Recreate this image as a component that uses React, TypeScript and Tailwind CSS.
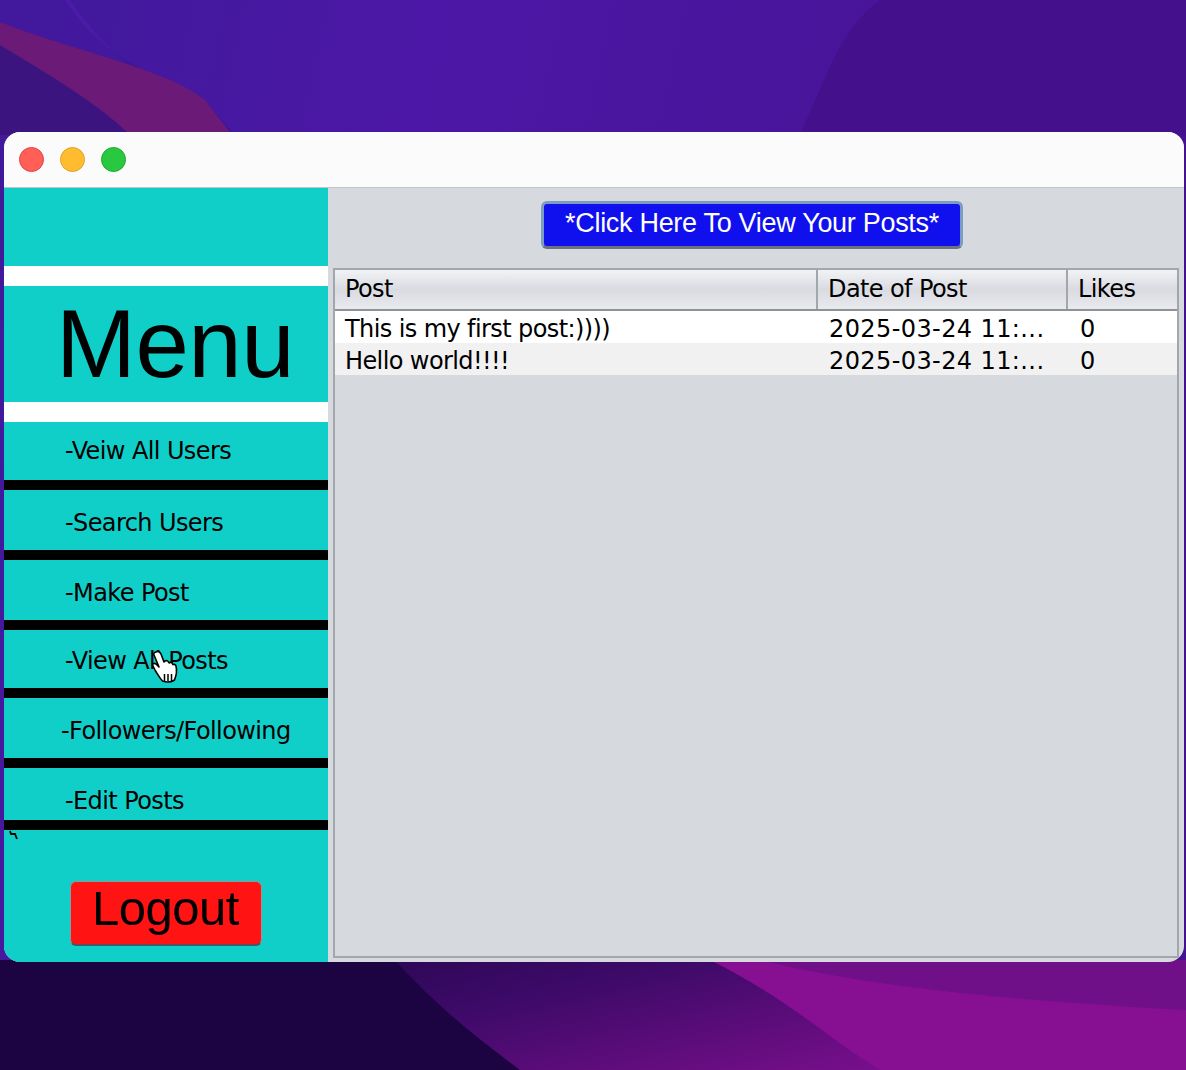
import React from "react";

const menuItems = [
  { label: "-Veiw All Users", height: "h-[58px]", pad: "pl-[61px]", offset: "pt-[15px]" },
  { label: "-Search Users", height: "h-[60px]", pad: "pl-[61px]", offset: "pt-[19px]" },
  { label: "-Make Post", height: "h-[60px]", pad: "pl-[61px]", offset: "pt-[19px]" },
  { label: "-View All Posts", height: "h-[58px]", pad: "pl-[61px]", offset: "pt-[17px]" },
  { label: "-Followers/Following", height: "h-[60px]", pad: "pl-[57px]", offset: "pt-[19px]" },
  { label: "-Edit Posts", height: "h-[52px]", pad: "pl-[61px]", offset: "pt-[19px]" },
];

const rows = [
  { post: "This is my first post:))))", date: "2025-03-24 11:...", likes: "0", bg: "bg-white" },
  { post: "Hello world!!!!", date: "2025-03-24 11:...", likes: "0", bg: "bg-[#f1f1f2]" },
];

function Wallpaper() {
  return (
    <svg className="absolute inset-0" width="1186" height="1070" viewBox="0 0 1186 1070">
      <defs>
        <linearGradient id="top" x1="0" y1="0" x2="1" y2="0.2">
          <stop offset="0" stopColor="#3f1a9a" />
          <stop offset="0.35" stopColor="#4c17a6" />
          <stop offset="1" stopColor="#45128f" />
        </linearGradient>
        <linearGradient id="bottom" x1="0" y1="0" x2="1" y2="0.4">
          <stop offset="0" stopColor="#1a0540" />
          <stop offset="0.5" stopColor="#3d0a68" />
          <stop offset="1" stopColor="#7a0f8c" />
        </linearGradient>
      </defs>
      <rect width="1186" height="1070" fill="url(#top)" />
      <path d="M0 0H70C110 60 170 100 235 135H0Z" fill="#4a1ca8" />
      <path d="M0 0H65C90 40 130 70 200 95L235 135H0Z" fill="#3a1492" opacity="0.5" />
      <path d="M0 22C70 50 170 70 205 100L232 135H0Z" fill="#6b1a78" />
      <path d="M0 45C50 75 100 105 130 135H0Z" fill="#3c1480" />
      <path d="M800 135C830 70 840 30 880 0H1186V135Z" fill="#44108c" />
      <rect y="960" width="1186" height="110" fill="url(#bottom)" />
      <path d="M0 960H395C440 1010 480 1040 520 1070H0Z" fill="#1c0442" />
      <path d="M710 960C790 1000 830 1040 880 1070H1186V960Z" fill="#860f92" />
      <path d="M760 960C860 985 1000 1000 1186 1010V960Z" fill="#6f1088" />
    </svg>
  );
}

function HandCursor() {
  return (
    <svg className="absolute left-[150px] top-[649px]" width="30" height="38" viewBox="0 0 30 38">
      <path
        d="M6 3c2-1.500 4 0 5 2l3 8 1-1c1.500-1 3 0 3.500 1l.8 1c1-1 2.700-.6 3.200.6l.5 1c1.200-.6 2.500 0 3 1.400 1 4 .5 9-1.500 14-3 2-8 2.500-12 1-3-3-5-7-7-10L3 17c-1-2 1-3.500 3-2l3 3-5-12c-.5-1.500 0-2.500 2-3z"
        fill="#ffffff"
        stroke="#000000"
        strokeWidth="1.600"
        strokeLinejoin="round"
      />
      <path d="M14.500 25v7M18 25v7M21.500 25v7" stroke="#000000" strokeWidth="1.500" />
    </svg>
  );
}

export default function App() {
  return (
    <div className="relative h-[1070px] w-[1186px] overflow-hidden pt-[132px] pl-[4px]">
      <Wallpaper />
      <div className="relative flex h-[830px] w-[1180px] flex-col overflow-hidden rounded-[16px] bg-[#d6d9de] font-['Liberation_Sans',sans-serif]">
        <div className="flex h-[56px] items-center gap-[16px] border-b border-[#c3c5c8] bg-[#fbfbfc] pl-[15px]">
          <span className="h-[25px] w-[25px] rounded-full border border-[#e0443e] bg-[#ff5f57]" />
          <span className="h-[25px] w-[25px] rounded-full border border-[#dea123] bg-[#febc2e]" />
          <span className="h-[25px] w-[25px] rounded-full border border-[#1aab29] bg-[#28c840]" />
        </div>

        <div className="flex flex-1">
          <aside className="flex w-[324px] flex-col bg-[#10cfc9]">
            <div className="h-[78px]" />
            <div className="h-[20px] bg-white" />
            <div className="flex h-[116px] items-center pl-[52px] text-[96px] leading-none text-black">
              <span className="tracking-[-0.5px]">Menu</span>
            </div>
            <div className="h-[20px] bg-white" />
            {menuItems.map((item) => (
              <div key={item.label}>
                <div
                  className={`${item.height} ${item.pad} ${item.offset} font-['DejaVu_Sans',sans-serif] text-[24px] leading-[28px] tracking-[-0.6px] text-black whitespace-nowrap`}
                >
                  {item.label}
                </div>
                <div className="h-[10px] bg-black" />
              </div>
            ))}
            <div className="relative flex flex-1 justify-center pl-[0px] pt-[51px]">
              <svg className="absolute left-[3px] top-0" width="12" height="10" viewBox="0 0 12 10">
                <path d="M3 1l1 3h4l2 5" fill="none" stroke="#000000" strokeWidth="1.800" />
              </svg>
              <button className="mr-[1px] h-[65px] w-[192px] rounded-[6px] border border-[#8f979c] border-b-[2px] border-b-[#4d5560] bg-[#ff1313] pb-[10px] text-[49px] leading-none tracking-[-0.5px] text-black">
                Logout
              </button>
            </div>
          </aside>

          <main className="flex flex-1 flex-col pt-[13px] pr-[5px] pb-[4px] pl-[5px]">
            <div className="flex h-[67px] justify-center">
              <button className="ml-[-8px] h-[48px] w-[422px] rounded-[6px] border-[3px] border-[#7d9cc0] border-b-[#6b7280] bg-[#1010ee] pb-[3px] text-[27px] leading-none tracking-[-0.3px] text-white">
                *Click Here To View Your Posts*
              </button>
            </div>

            <div className="flex flex-1 flex-col border-2 border-[#a3a6ab] font-['DejaVu_Sans',sans-serif] text-[24px] tracking-[-0.6px] text-black">
              <div className="flex h-[41px] shrink-0 border-b-2 border-[#8f9298] bg-linear-to-b from-[#f2f3f5] via-[#d9dbe1] to-[#e9eaee] leading-[38px]">
                <div className="w-[483px] border-r-2 border-[#a3a6ab] pl-[10px]">Post</div>
                <div className="w-[250px] border-r-2 border-[#a3a6ab] pl-[10px]">Date of Post</div>
                <div className="flex-1 pl-[10px]">Likes</div>
              </div>
              {rows.map((row) => (
                <div key={row.post} className={`flex h-[32px] shrink-0 leading-[36px] ${row.bg}`}>
                  <div className="w-[484px] pl-[10px]">{row.post}</div>
                  <div className="w-[251px] pl-[10px] tracking-[0.4px]">{row.date}</div>
                  <div className="flex-1 pl-[10px]">{row.likes}</div>
                </div>
              ))}
            </div>
          </main>
        </div>
      </div>
      <HandCursor />
    </div>
  );
}
